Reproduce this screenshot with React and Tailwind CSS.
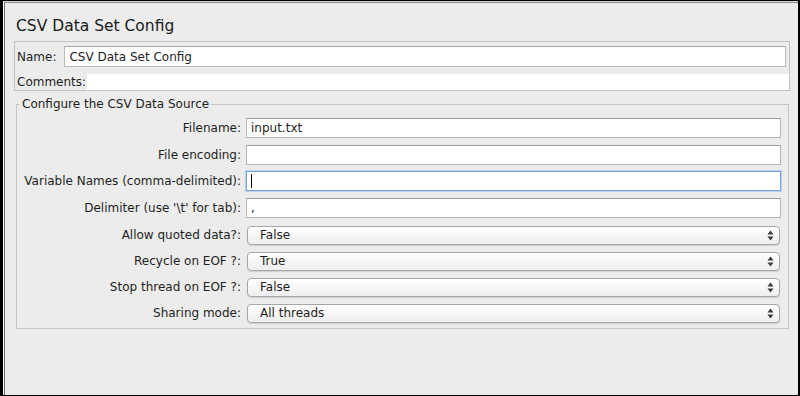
import React from "react";

function Arrows() {
  return (
    <svg width="7" height="11" viewBox="0 0 7 11" className="shrink-0">
      <path d="M3.5 0.5 L6.5 4.5 L0.5 4.5 Z" fill="#3a3a3a" />
      <path d="M3.5 10.5 L6.5 6.5 L0.5 6.5 Z" fill="#3a3a3a" />
    </svg>
  );
}

function TextField({ value, focused }) {
  return (
    <div
      className={
        "ml-[5px] mr-[7px] flex h-[20px] flex-1 items-center bg-white pl-[4px] " +
        (focused
          ? "border border-[#7da2d6] shadow-[0_0_0_1px_#b9d0ee]"
          : "border border-[#b4b4b4] border-t-[#9c9c9c]")
      }
    >
      {focused ? <div className="h-[14px] w-[1px] bg-black" /> : <span>{value}</span>}
    </div>
  );
}

function Select({ value }) {
  return (
    <div className="ml-[6px] mr-[8px] flex h-[19px] flex-1 items-center justify-between rounded-[4px] border border-[#a6a6a6] bg-gradient-to-b from-white to-[#eeeeee] pl-[12px] pr-[5px] shadow-[0_1px_1px_rgba(0,0,0,0.12)]">
      <span>{value}</span>
      <Arrows />
    </div>
  );
}

function Row({ label, children, extra = "" }) {
  return (
    <div className={"flex h-[26px] items-center " + extra}>
      <div className="w-[224px] shrink-0 whitespace-nowrap text-right">{label}</div>
      {children}
    </div>
  );
}

export default function App() {
  return (
    <div
      className="h-[396px] w-[800px] overflow-hidden border-b border-l-[3px] border-r-[2px] border-t border-black bg-[#ececec] text-[12px] leading-[14px] text-[#1e1e1e]"
      style={{ fontFamily: "'DejaVu Sans', 'Liberation Sans', sans-serif" }}
    >
      <div className="h-full border-l border-t border-l-white border-t-[#d6d6d6]">
        <div className="h-full border-l border-t border-l-[#6f6f6f] border-t-[#8c8c8c]">
          <div className="ml-[11px] mt-[13px] h-[20px] text-[15.5px] leading-[20px] text-[#1a1a1a]">
            CSV Data Set Config
          </div>

          <div className="ml-[9px] mt-[5px] h-[50px] w-[776px] border border-[#c2c2c2]">
            <div className="mt-[4px] flex h-[21px] items-center">
              <span className="pl-[2px]">Name:</span>
              <div className="ml-[8px] mr-[3px] flex h-[21px] flex-1 items-center border border-[#b9b9b9] border-t-[#a3a3a3] bg-white pl-[4px]">
                CSV Data Set Config
              </div>
            </div>
            <div className="mt-[7px] flex h-[16px] items-center">
              <span className="pl-[2px]">Comments:</span>
              <div className="ml-[1px] h-[16px] flex-1 bg-white" />
            </div>
          </div>

          <fieldset className="ml-[11px] mt-[6px] w-[773px] border border-[#c6c6c6] pb-[2px]">
            <legend className="ml-[3px] px-[2px] text-[12px] leading-[14px]">
              Configure the CSV Data Source
            </legend>
            <div className="mt-[4px] flex flex-col">
              <Row label="Filename:">
                <TextField value="input.txt" />
              </Row>
              <Row label="File encoding:" extra="mt-[1px]">
                <TextField value="" />
              </Row>
              <Row label="Variable Names (comma-delimited):">
                <TextField value="" focused />
              </Row>
              <Row label="Delimiter (use '\t' for tab):" extra="mt-[1px]">
                <TextField value="," />
              </Row>
              <Row label="Allow quoted data?:" extra="mt-[1px]">
                <Select value="False" />
              </Row>
              <Row label="Recycle on EOF ?:">
                <Select value="True" />
              </Row>
              <Row label="Stop thread on EOF ?:">
                <Select value="False" />
              </Row>
              <Row label="Sharing mode:">
                <Select value="All threads" />
              </Row>
            </div>
          </fieldset>
        </div>
      </div>
    </div>
  );
}
